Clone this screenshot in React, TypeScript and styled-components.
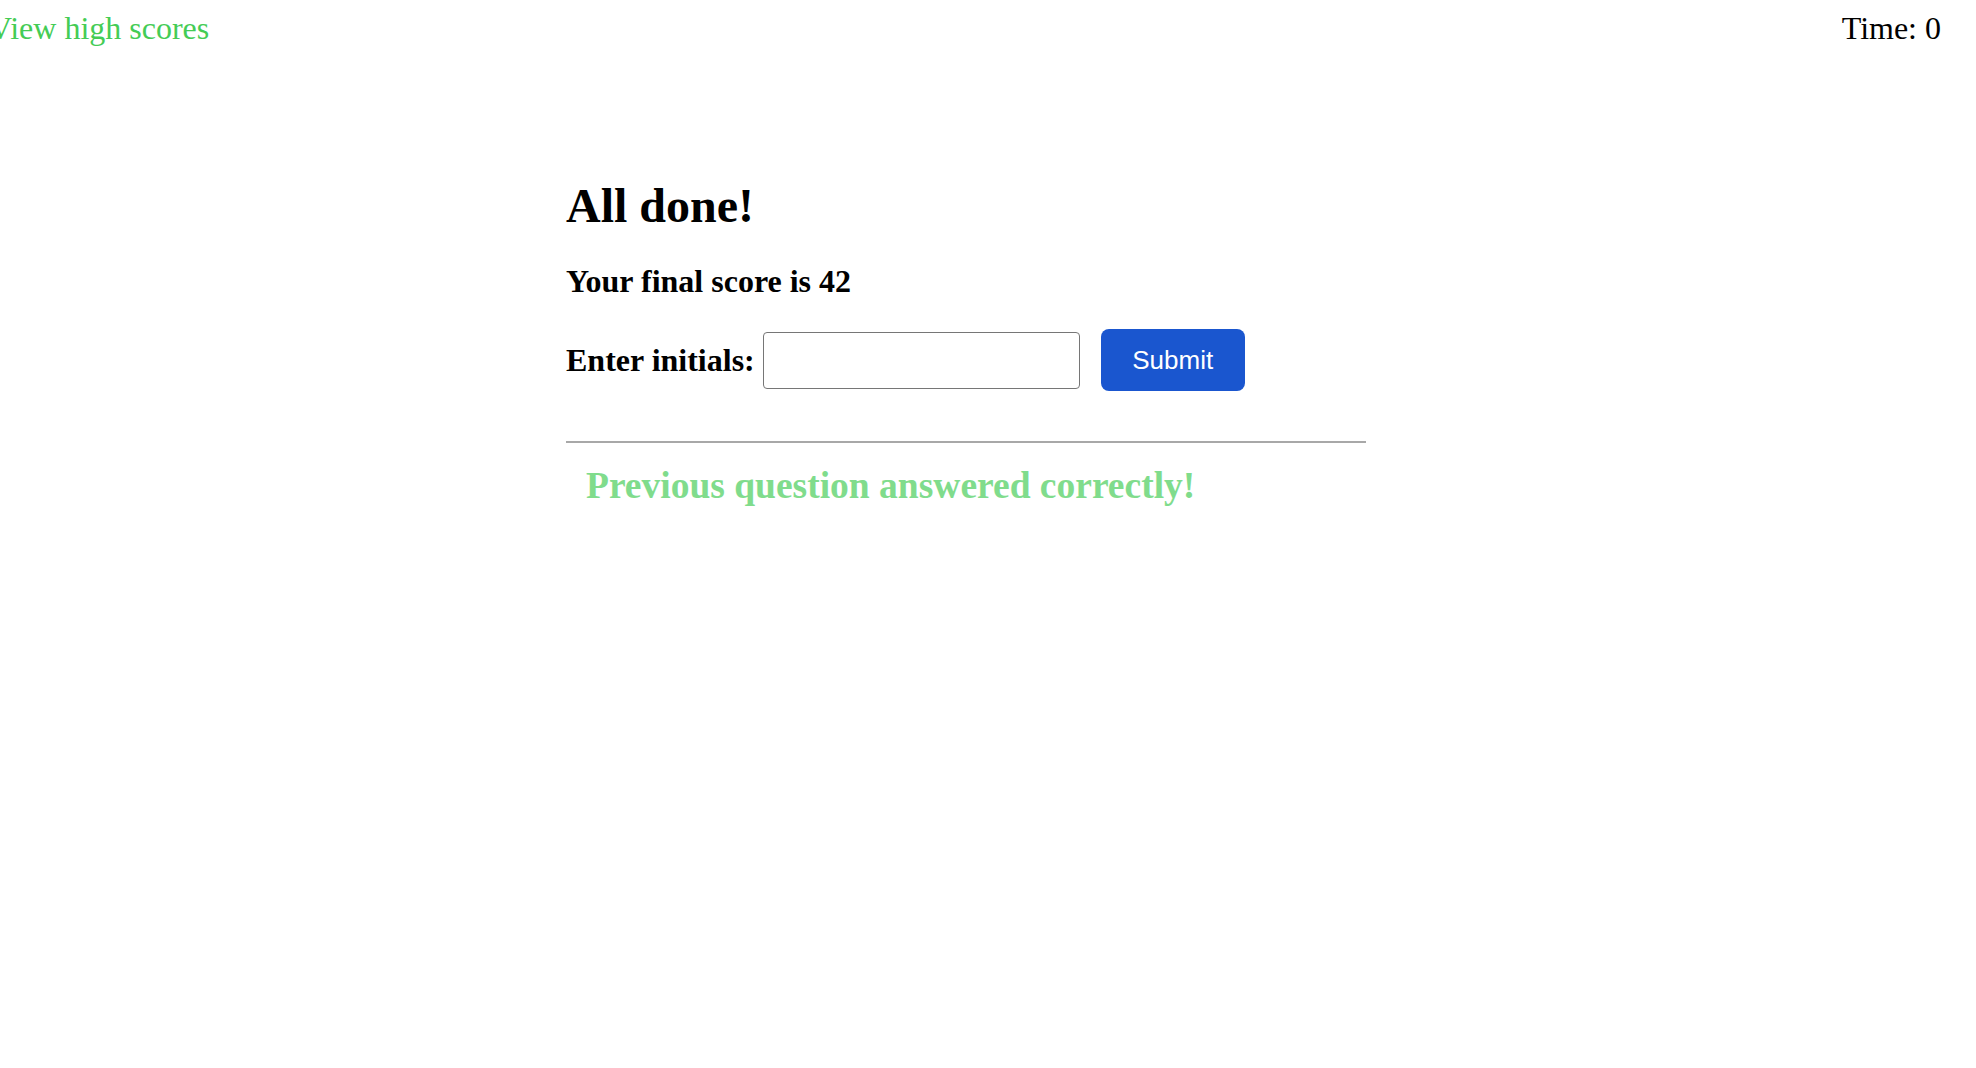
import React from "react";
import styled, { createGlobalStyle } from "styled-components";

const GlobalStyle = createGlobalStyle`
  html, body {
    margin: 0;
    padding: 0;
    background: #ffffff;
  }
  body {
    font-family: "Liberation Serif", "Times New Roman", serif;
    color: #000000;
  }
`;

const Header = styled.header`
  display: flex;
  justify-content: space-between;
  align-items: baseline;
  padding: 10px 35px 0 0;
  font-size: 32px;
  line-height: 36px;
`;

const HighScoresLink = styled.a`
  margin-left: -11px;
  color: #44cc55;
  text-decoration: none;
  cursor: pointer;
`;

const Timer = styled.div`
  color: #000000;
`;

const Main = styled.main`
  width: 800px;
  margin-left: calc(50% - 422px);
  margin-top: 132px;
`;

const Title = styled.h1`
  margin: 0;
  font-size: 48px;
  line-height: 56px;
  font-weight: bold;
`;

const Score = styled.p`
  margin: 29px 0 0;
  font-size: 32px;
  line-height: 36px;
  font-weight: bold;
`;

const Form = styled.form`
  display: flex;
  align-items: center;
  margin-top: 30px;
`;

const Label = styled.label`
  font-size: 32px;
  line-height: 36px;
  font-weight: bold;
  margin-right: 8px;
`;

const Input = styled.input`
  box-sizing: border-box;
  width: 317px;
  height: 57px;
  border: 1.5px solid #767676;
  border-radius: 4px;
  padding: 0 8px;
  font-size: 26px;
  font-family: "Liberation Sans", Arial, sans-serif;
  outline: none;
  background: #ffffff;
`;

const SubmitButton = styled.button`
  box-sizing: border-box;
  margin-left: 21px;
  width: 144px;
  height: 62px;
  border: none;
  border-radius: 8px;
  background: #1a56cf;
  color: #ffffff;
  font-family: "Liberation Sans", Arial, sans-serif;
  font-size: 26px;
  cursor: pointer;
`;

const Divider = styled.hr`
  margin: 50px 0 0;
  border: none;
  border-top: 2px solid #a8a8a8;
  height: 0;
`;

const Feedback = styled.h2`
  margin: 22px 0 0;
  padding-left: 20px;
  font-size: 37.5px;
  line-height: 42px;
  font-weight: bold;
  color: #80dc8c;
`;

export default function App() {
  return (
    <>
      <GlobalStyle />
      <Header>
        <HighScoresLink>View high scores</HighScoresLink>
        <Timer>Time: 0</Timer>
      </Header>
      <Main>
        <Title>All done!</Title>
        <Score>Your final score is 42</Score>
        <Form onSubmit={(e) => e.preventDefault()}>
          <Label htmlFor="initials">Enter initials:</Label>
          <Input id="initials" type="text" />
          <SubmitButton type="submit">Submit</SubmitButton>
        </Form>
        <Divider />
        <Feedback>Previous question answered correctly!</Feedback>
      </Main>
    </>
  );
}
